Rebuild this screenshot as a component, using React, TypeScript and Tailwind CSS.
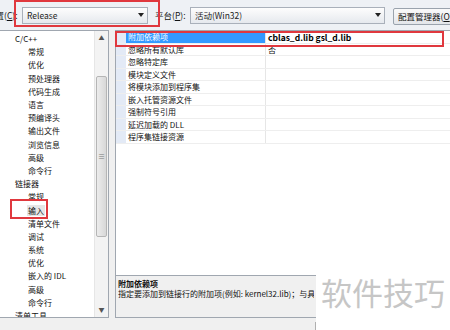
import React from 'react';

const treeItems: { text: string; level: number; selected?: boolean }[] = [
  { text: 'C/C++', level: 0 },
  { text: '常规', level: 1 },
  { text: '优化', level: 1 },
  { text: '预处理器', level: 1 },
  { text: '代码生成', level: 1 },
  { text: '语言', level: 1 },
  { text: '预编译头', level: 1 },
  { text: '输出文件', level: 1 },
  { text: '浏览信息', level: 1 },
  { text: '高级', level: 1 },
  { text: '命令行', level: 1 },
  { text: '链接器', level: 0 },
  { text: '常规', level: 1 },
  { text: '输入', level: 1, selected: true },
  { text: '清单文件', level: 1 },
  { text: '调试', level: 1 },
  { text: '系统', level: 1 },
  { text: '优化', level: 1 },
  { text: '嵌入的 IDL', level: 1 },
  { text: '高级', level: 1 },
  { text: '命令行', level: 1 },
  { text: '清单工具', level: 0 },
];

const props: { name: string; value: string }[] = [
  { name: '附加依赖项', value: 'cblas_d.lib gsl_d.lib' },
  { name: '忽略所有默认库', value: '否' },
  { name: '忽略特定库', value: '' },
  { name: '模块定义文件', value: '' },
  { name: '将模块添加到程序集', value: '' },
  { name: '嵌入托管资源文件', value: '' },
  { name: '强制符号引用', value: '' },
  { name: '延迟加载的 DLL', value: '' },
  { name: '程序集链接资源', value: '' },
];

function Arrow() {
  return (
    <svg width="6" height="4" viewBox="0 0 6 4" className="shrink-0">
      <path d="M0 0h6L3 4z" fill="#222" />
    </svg>
  );
}

function Combo({ text, className }: { text: string; className: string }) {
  return (
    <div className={`shrink-0 h-[17px] flex items-center border border-[#a9b0ba] bg-gradient-to-b from-[#fdfdfd] to-[#e6e9ee] pl-[4px] pr-[3px] ${className}`}>
      <span className="flex-1 text-[8.5px] leading-none whitespace-nowrap text-[#222]">{text}</span>
      <Arrow />
    </div>
  );
}

export default function App() {
  return (
    <div
      className="relative w-[450px] h-[330px] overflow-hidden bg-[#f0f0f0] text-[8px] text-[#111]"
      style={{ fontFamily: '"Noto Sans CJK SC", "Liberation Sans", sans-serif' }}
    >
      {/* Toolbar */}
      <div className="h-[30px] flex items-center bg-[#eef1f5] whitespace-nowrap">
        <span className="shrink-0 ml-[-13px] w-[29px] text-[8.5px] leading-none">配置(<u>C</u>):</span>
        <Combo text="Release" className="ml-[6px] w-[126px]" />
        <span className="shrink-0 ml-[7px] w-[35px] text-[8.5px] leading-none">平台(<u>P</u>):</span>
        <Combo text="活动(Win32)" className="w-[195px]" />
        <div className="shrink-0 ml-[8px] mt-[2px] h-[17px] flex items-center border border-[#9aa3ad] rounded-[2px] bg-gradient-to-b from-[#fafafa] to-[#e3e6ea] px-[4px] text-[8.5px] leading-none">
          配置管理器(<u>O</u>)
        </div>
      </div>

      {/* Main area */}
      <div className="flex h-[288px]">
        {/* Tree */}
        <div className="shrink-0 w-[109px] flex border border-l-0 border-[#a0a7b0] bg-white">
          <div className="flex-1 pt-[1px] overflow-hidden">
            {treeItems.map((it, i) => (
              <div key={i} className={`h-[13.2px] flex items-center whitespace-nowrap ${it.level === 0 ? 'pl-[15px]' : 'pl-[28px]'}`}>
                <span className={`text-[8px] leading-[11px] ${it.selected ? 'bg-[#e6e6e6] px-[1px] ml-[-1px]' : ''}`}>{it.text}</span>
              </div>
            ))}
          </div>
          {/* scrollbar */}
          <div className="w-[14px] flex flex-col items-center bg-[#f3f3f3] border-l border-[#e6e6e6]">
            <span className="h-[14px] text-[6px] text-[#555] leading-[14px]">▲</span>
            <div className="mt-[31px] h-[161px] w-[11px] rounded-[2px] border border-[#b5b5b5] bg-gradient-to-r from-[#ececec] to-[#d8d8d8] flex items-center justify-center">
              <span className="text-[7px] text-[#777] leading-none">≡</span>
            </div>
            <div className="flex-1" />
            <span className="h-[14px] text-[6px] text-[#555] leading-[14px]">▼</span>
          </div>
        </div>

        {/* Property grid */}
        <div className="ml-[6px] flex-1 min-w-0 flex flex-col border border-r-0 border-[#a0a7b0] bg-white">
          <div className="flex-1">
            {props.map((p, i) => (
              <div key={i} className="h-[12.5px] flex border-b border-[#eeeeee] whitespace-nowrap">
                <div className="w-[10px] bg-[#e3eaf6]" />
                <div className={`w-[140px] pl-[2px] text-[8px] leading-[12px] border-r border-[#e6e6e6] ${i === 0 ? 'bg-[#3399ff] text-white' : ''}`}>
                  {p.name}
                </div>
                <div className={`flex-1 pl-[2px] leading-[12px] ${i === 0 ? 'font-bold text-[8.5px] text-black' : 'text-[8px]'}`}>
                  {p.value}
                </div>
              </div>
            ))}
          </div>
          <div className="h-[42px] border-t border-[#a0a7b0] bg-[#f0f0f0] px-[2px] pt-[3px] whitespace-nowrap">
            <div className="font-bold text-[8px] leading-[10px]">附加依赖项</div>
            <div className="w-[196px] overflow-hidden text-[8px] leading-[10px]">指定要添加到链接行的附加项(例如: kernel32.lib)；与具有相同名称的</div>
          </div>
        </div>
      </div>

      {/* Watermark */}
      <div className="absolute left-[316px] top-[252px] w-[134px] h-[78px] bg-white flex items-center justify-center">
        <span className="text-[31px] leading-none whitespace-nowrap text-[#c6c6c6]">软件技巧</span>
      </div>
      <div className="absolute left-[315px] top-[322px] w-[1px] h-[8px] bg-[#b0b0b0]" />

      {/* Red annotations */}
      <div className="absolute left-[14px] top-0 w-[146px] h-[27px] border-2 border-[#e0383e]" />
      <div className="absolute left-[115px] top-[31px] w-[329px] h-[16px] border-2 border-[#e0383e]" />
      <div className="absolute left-[10px] top-[199px] w-[38px] h-[20px] border-2 border-[#e0383e]" />
    </div>
  );
}
